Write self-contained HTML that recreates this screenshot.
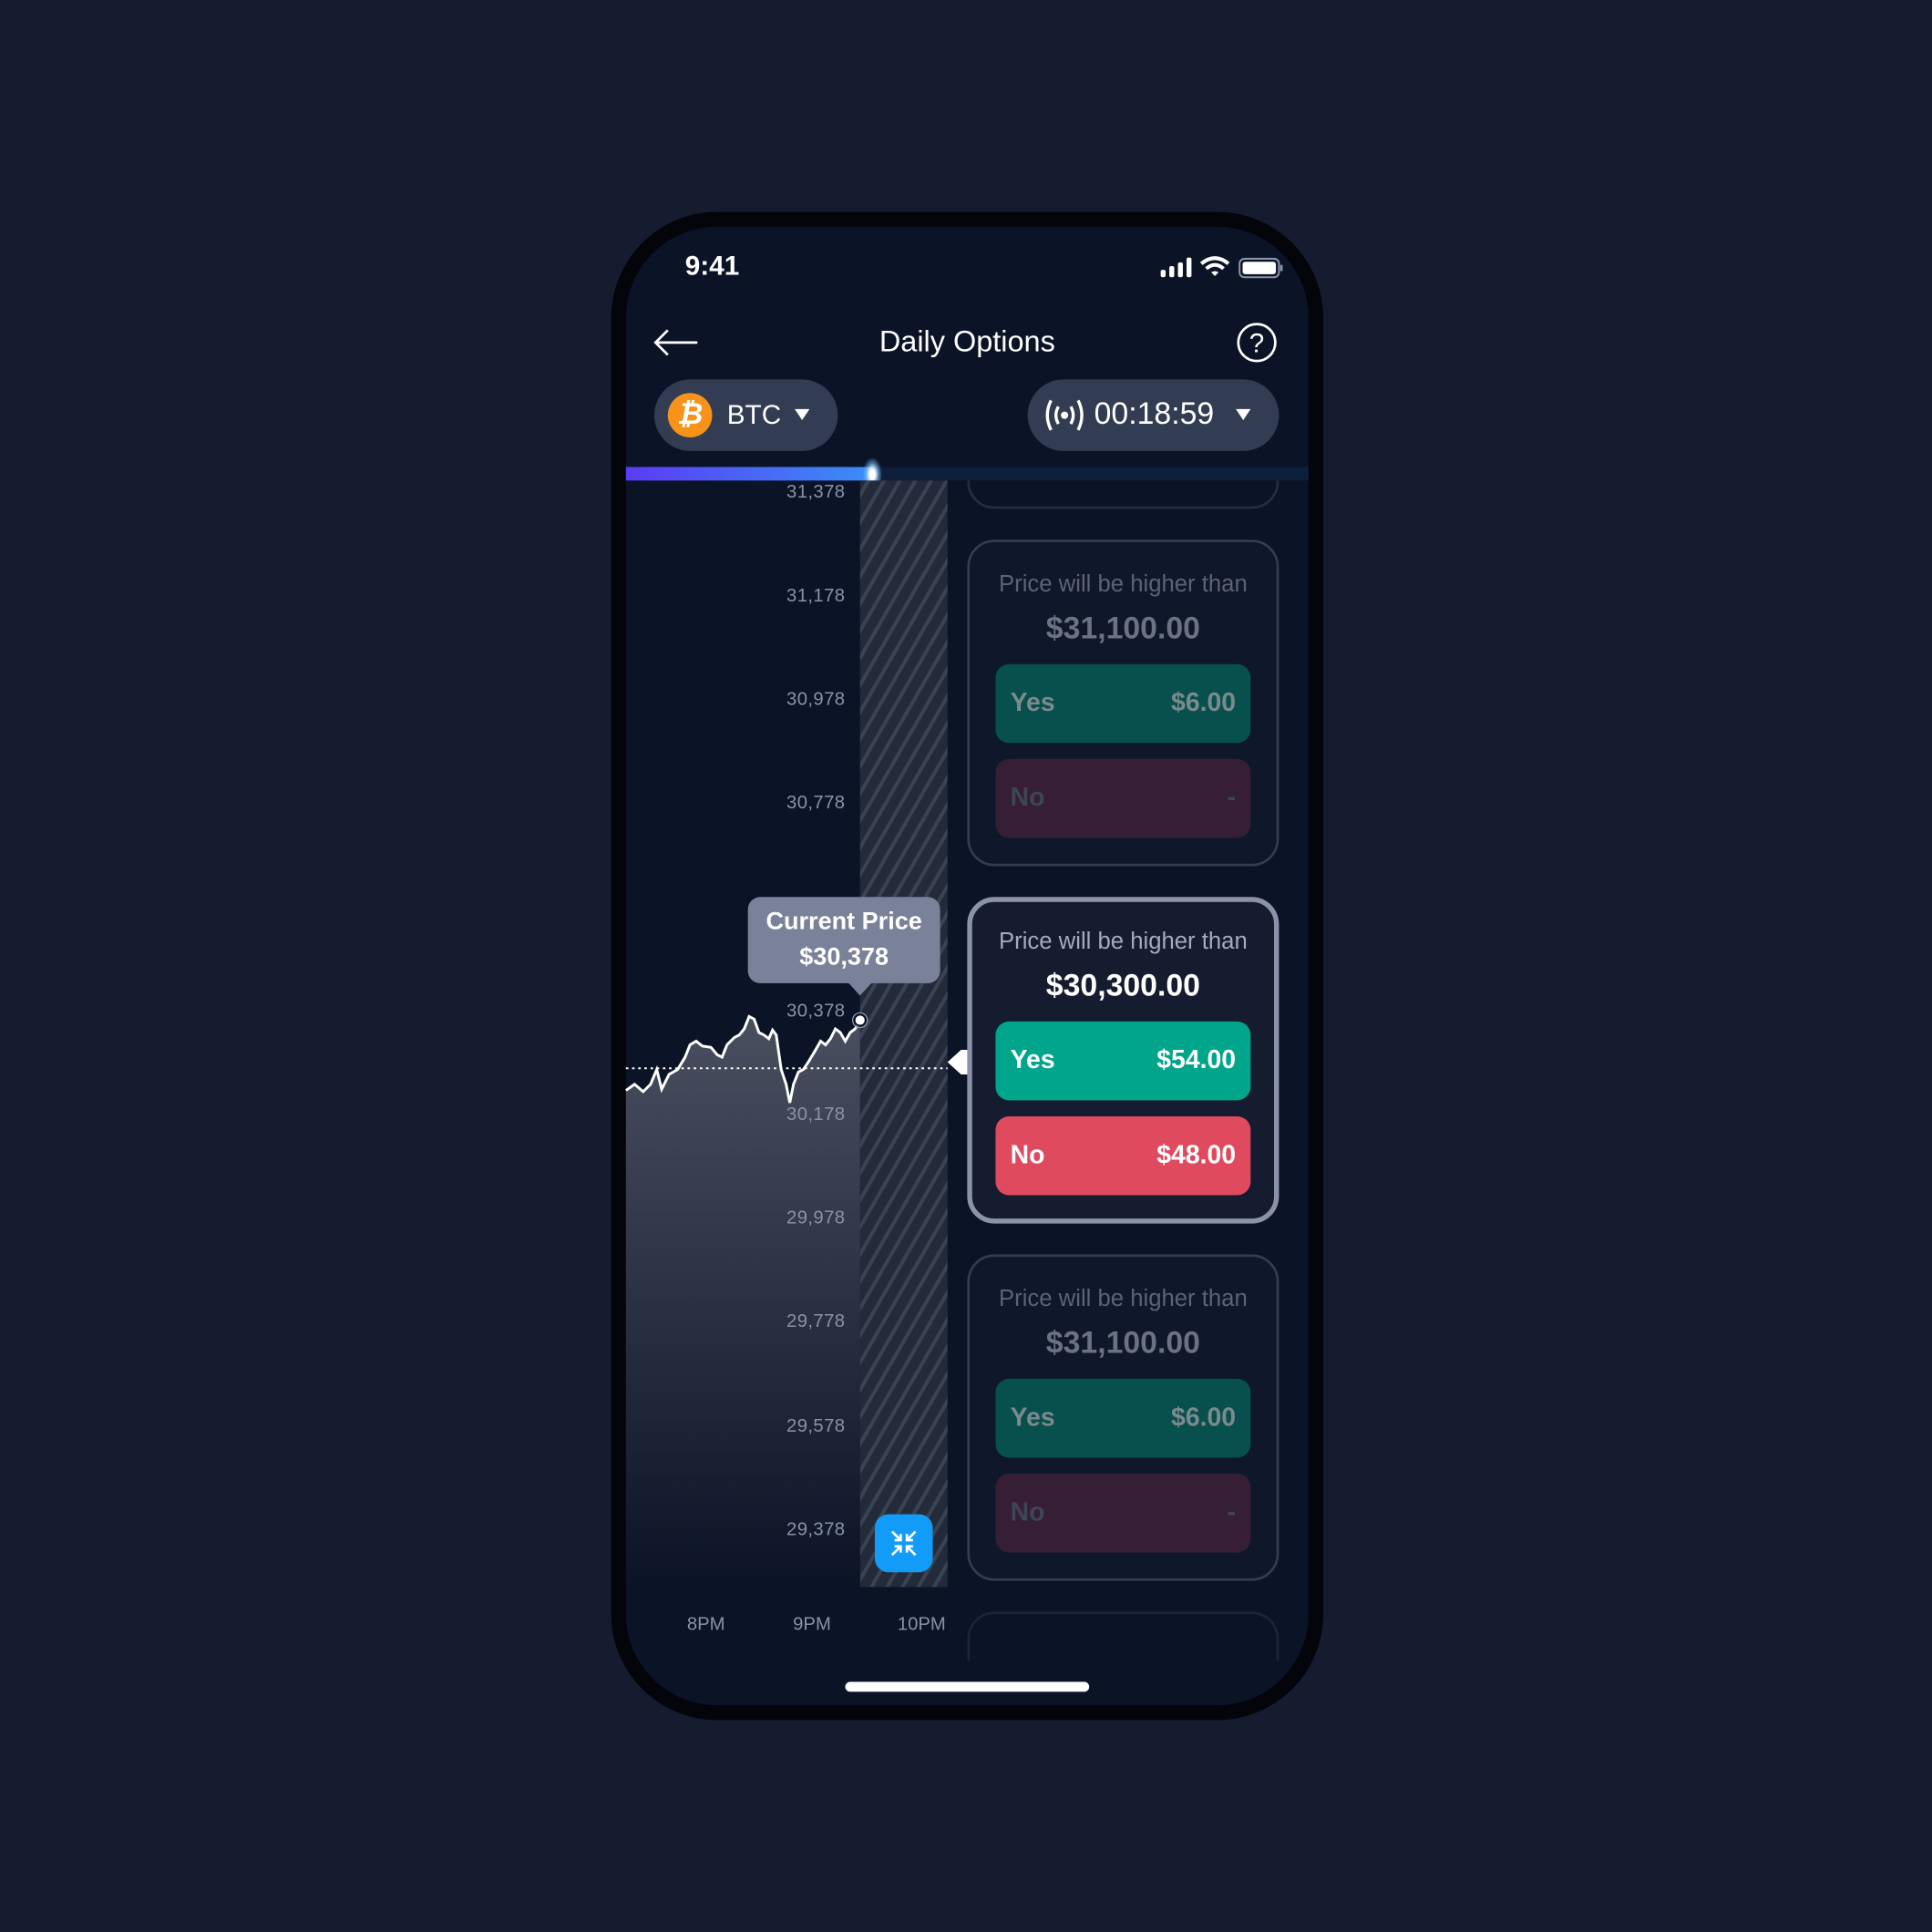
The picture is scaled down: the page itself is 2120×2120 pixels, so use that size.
<!DOCTYPE html>
<html><head><meta charset="utf-8"><style>
*{margin:0;padding:0;box-sizing:border-box}
html,body{width:2120px;height:2120px;overflow:hidden;background:#151c2f;font-family:"Liberation Sans",sans-serif}
#w{position:absolute;left:0;top:0;width:1568px;height:1568px;transform:scale(1.35204);transform-origin:0 0}
.a{position:absolute}
.lbl{position:absolute;right:882px;font-size:15px;color:#8a93a6;letter-spacing:0.3px}
.card{position:absolute;left:785px;width:253px;height:265px;border:2px solid #343d50;border-radius:22px;background:#0f172a}
.card .t{position:absolute;top:24px;width:100%;text-align:center;font-size:19px;color:#5b6375}
.card .p{position:absolute;top:56px;width:100%;text-align:center;font-size:25px;font-weight:bold;color:#6b7282}
.btn{position:absolute;left:21px;width:207px;height:64px;border-radius:11px;font-size:21px;font-weight:bold;padding:0 12px;display:flex;justify-content:space-between;align-items:center}
.xl{position:absolute;top:1310px;font-size:15px;color:#8a93a6;transform:translateX(-50%)}
</style></head><body><div id="w">
<div class="a" style="left:496px;top:172px;width:578px;height:1224px;border-radius:86px;background:#03050a"></div>
<div class="a" style="left:508px;top:184px;width:554px;height:1200px;border-radius:74px;background:#0b1326;overflow:hidden">
</div>
<div class="a" style="left:556px;top:203px;font-size:22px;font-weight:bold;color:#fff">9:41</div>
<svg class="a" style="left:940px;top:206px" width="102" height="24" viewBox="0 0 102 24">
<rect x="2" y="13" width="4" height="6" rx="1.5" fill="#fff"/><rect x="9" y="10" width="4" height="9" rx="1.5" fill="#fff"/><rect x="16" y="7" width="4" height="12" rx="1.5" fill="#fff"/><rect x="23" y="3" width="4" height="16" rx="1.5" fill="#fff"/>
<path d="M35 8 Q46 -1 57 8" stroke="#fff" stroke-width="3" fill="none"/><path d="M39 12 Q46 6 53 12" stroke="#fff" stroke-width="3" fill="none"/><path d="M43 15 L46 18 L49 15 Q46 13 43 15Z" fill="#fff"/>
<rect x="66" y="4" width="32" height="15" rx="4" stroke="#8a93a6" stroke-width="1.5" fill="none"/><rect x="68.5" y="6.5" width="27" height="10" rx="2" fill="#fff"/><rect x="99" y="9" width="2" height="5" fill="#8a93a6"/>
</svg>
<svg class="a" style="left:529px;top:266px" width="40" height="24"><path d="M37 12H3M13 2L3 12L13 22" stroke="#fff" stroke-width="2" fill="none"/></svg>
<div class="a" style="left:585px;top:264px;width:400px;text-align:center;font-size:24px;color:#fff">Daily Options</div>
<svg class="a" style="left:1003px;top:261px" width="34" height="34"><circle cx="17" cy="17" r="15" stroke="#fff" stroke-width="2" fill="none"/><text x="17" y="25" text-anchor="middle" font-size="22" fill="#fff" font-family="Liberation Sans">?</text></svg>
<div class="a" style="left:531px;top:308px;width:149px;height:58px;border-radius:29px;background:#323c52"></div>
<div class="a" style="left:542px;top:319px;width:36px;height:36px;border-radius:50%;background:#f7931a;color:#fff;font-weight:bold;font-size:24px;text-align:center;line-height:36px;font-style:italic">₿</div>
<div class="a" style="left:590px;top:324px;font-size:22px;color:#fff">BTC</div>
<svg class="a" style="left:644px;top:331px" width="14" height="12"><path d="M1 1H13L7 10Z" fill="#fff"/></svg>
<div class="a" style="left:834px;top:308px;width:204px;height:58px;border-radius:29px;background:#323c52"></div>
<svg class="a" style="left:845px;top:322px" width="38" height="30"><path d="M8 3Q2 15 8 27M14 8Q10 15 14 22M30 3Q36 15 30 27M24 8Q28 15 24 22" stroke="#fff" stroke-width="2.5" fill="none"/><circle cx="19" cy="15" r="3" fill="#fff"/></svg>
<div class="a" style="left:888px;top:322px;font-size:25px;color:#fff">00:18:59</div>
<svg class="a" style="left:1002px;top:331px" width="14" height="12"><path d="M1 1H13L7 10Z" fill="#fff"/></svg>
<div class="a" style="left:508px;top:379px;width:554px;height:11px;background:#0e1f3b"></div>
<div class="a" style="left:508px;top:379px;width:200px;height:11px;background:linear-gradient(90deg,#5b3cf5,#3b8df7)"></div>
<div class="a" style="left:700px;top:371px;width:16px;height:28px;border-radius:50%;background:radial-gradient(#fff 20%,rgba(120,190,255,.6) 45%,transparent 70%)"></div>
<div class="a" style="left:698px;top:390px;width:71px;height:898px;background:repeating-linear-gradient(-60deg,#232b3b 0 8px,#3a4352 8px 11px)"></div>
<svg class="a" style="left:0;top:0" width="1568" height="1568">
<defs><linearGradient id="g" x1="0" y1="820" x2="0" y2="1288" gradientUnits="userSpaceOnUse"><stop offset="0" stop-color="#4a5060"/><stop offset="1" stop-color="#0b1326"/></linearGradient></defs>
<path d="M508 885L515 880 522 886 528 880 533 868 537 884 543 872 550 868 556 858 560 848 565 845 570 849 577 850 582 856 586 858 590 848 596 842 600 840 604 835 608 825 612 827 616 838 620 840 624 843 627 836 630 840 634 868 638 880 641 895 644 880 648 870 652 868 656 862 662 852 666 845 670 848 674 843 678 835 682 838 686 845 690 838 694 835 698 828L698 1288 508 1288Z" fill="url(#g)"/>
<path d="M508 885L515 880 522 886 528 880 533 868 537 884 543 872 550 868 556 858 560 848 565 845 570 849 577 850 582 856 586 858 590 848 596 842 600 840 604 835 608 825 612 827 616 838 620 840 624 843 627 836 630 840 634 868 638 880 641 895 644 880 648 870 652 868 656 862 662 852 666 845 670 848 674 843 678 835 682 838 686 845 690 838 694 835 698 828" stroke="#fff" stroke-width="2.2" fill="none"/>
<line x1="508" y1="867" x2="769" y2="867" stroke="#fff" stroke-width="1.5" stroke-dasharray="2 3"/>
<circle cx="698" cy="828" r="4.5" fill="#fff" stroke="#0b1326" stroke-width="1.5"/><circle cx="698" cy="828" r="6" fill="none" stroke="#8a93a6" stroke-width="1"/>
<path d="M769 862L780 852 786 852 786 872 780 872Z" fill="#fff"/>
</svg>
<div class="lbl" style="top:391px">31,378</div>
<div class="lbl" style="top:475px">31,178</div>
<div class="lbl" style="top:559px">30,978</div>
<div class="lbl" style="top:643px">30,778</div>
<div class="lbl" style="top:812px">30,378</div>
<div class="lbl" style="top:896px">30,178</div>
<div class="lbl" style="top:980px">29,978</div>
<div class="lbl" style="top:1064px">29,778</div>
<div class="lbl" style="top:1149px">29,578</div>
<div class="lbl" style="top:1233px">29,378</div>
<div class="a" style="left:607px;top:728px;width:156px;height:70px;border-radius:10px;background:#7a8299;color:#fff;font-weight:bold;font-size:20px;text-align:center;line-height:29px;padding-top:6px">Current Price<br>$30,378</div>
<svg class="a" style="left:688px;top:797px" width="20" height="12"><path d="M0 0H20L10 11Z" fill="#7a8299"/></svg>
<div class="a" style="left:710px;top:1229px;width:47px;height:47px;border-radius:11px;background:#139cf7"></div>
<svg class="a" style="left:710px;top:1229px" width="47" height="47"><g stroke="#fff" stroke-width="2" fill="none"><path d="M14 14L21 21M21 16V21H16M33 14L26 21M26 16V21H31M14 33L21 26M16 26H21V31M33 33L26 26M31 26H26V31"/></g></svg>
<div class="xl" style="left:573px">8PM</div><div class="xl" style="left:659px">9PM</div><div class="xl" style="left:748px">10PM</div>
<div class="a" style="left:785px;top:390px;width:253px;height:23px;overflow:hidden"><div style="position:absolute;left:0;bottom:0;width:253px;height:60px;border:2px solid #252e40;border-radius:22px"></div></div>
<div class="card" style="top:438px"><div class="t">Price will be higher than</div><div class="p">$31,100.00</div>
<div class="btn" style="top:99px;background:#07504d;color:#7b8a8c"><span>Yes</span><span>$6.00</span></div>
<div class="btn" style="top:176px;background:#361f35;color:#3d4657"><span>No</span><span>-</span></div></div>
<div class="card" style="top:728px;border:4px solid #8a93aa;background:#151c2f"><div class="t" style="top:22px;color:#a3abbd">Price will be higher than</div><div class="p" style="top:54px;color:#fff">$30,300.00</div>
<div class="btn" style="top:97px;left:19px;background:#00a58b;color:#fff"><span>Yes</span><span>$54.00</span></div>
<div class="btn" style="top:174px;left:19px;background:#e04a5e;color:#fff"><span>No</span><span>$48.00</span></div></div>
<div class="card" style="top:1018px"><div class="t">Price will be higher than</div><div class="p">$31,100.00</div>
<div class="btn" style="top:99px;background:#07504d;color:#7b8a8c"><span>Yes</span><span>$6.00</span></div>
<div class="btn" style="top:176px;background:#361f35;color:#3d4657"><span>No</span><span>-</span></div></div>
<div class="a" style="left:785px;top:1308px;width:253px;height:40px;border:2px solid #1c2538;border-bottom:none;border-radius:22px 22px 0 0"></div>
<div class="a" style="left:686px;top:1365px;width:198px;height:8px;border-radius:4px;background:#fff"></div>
</div></body></html>
